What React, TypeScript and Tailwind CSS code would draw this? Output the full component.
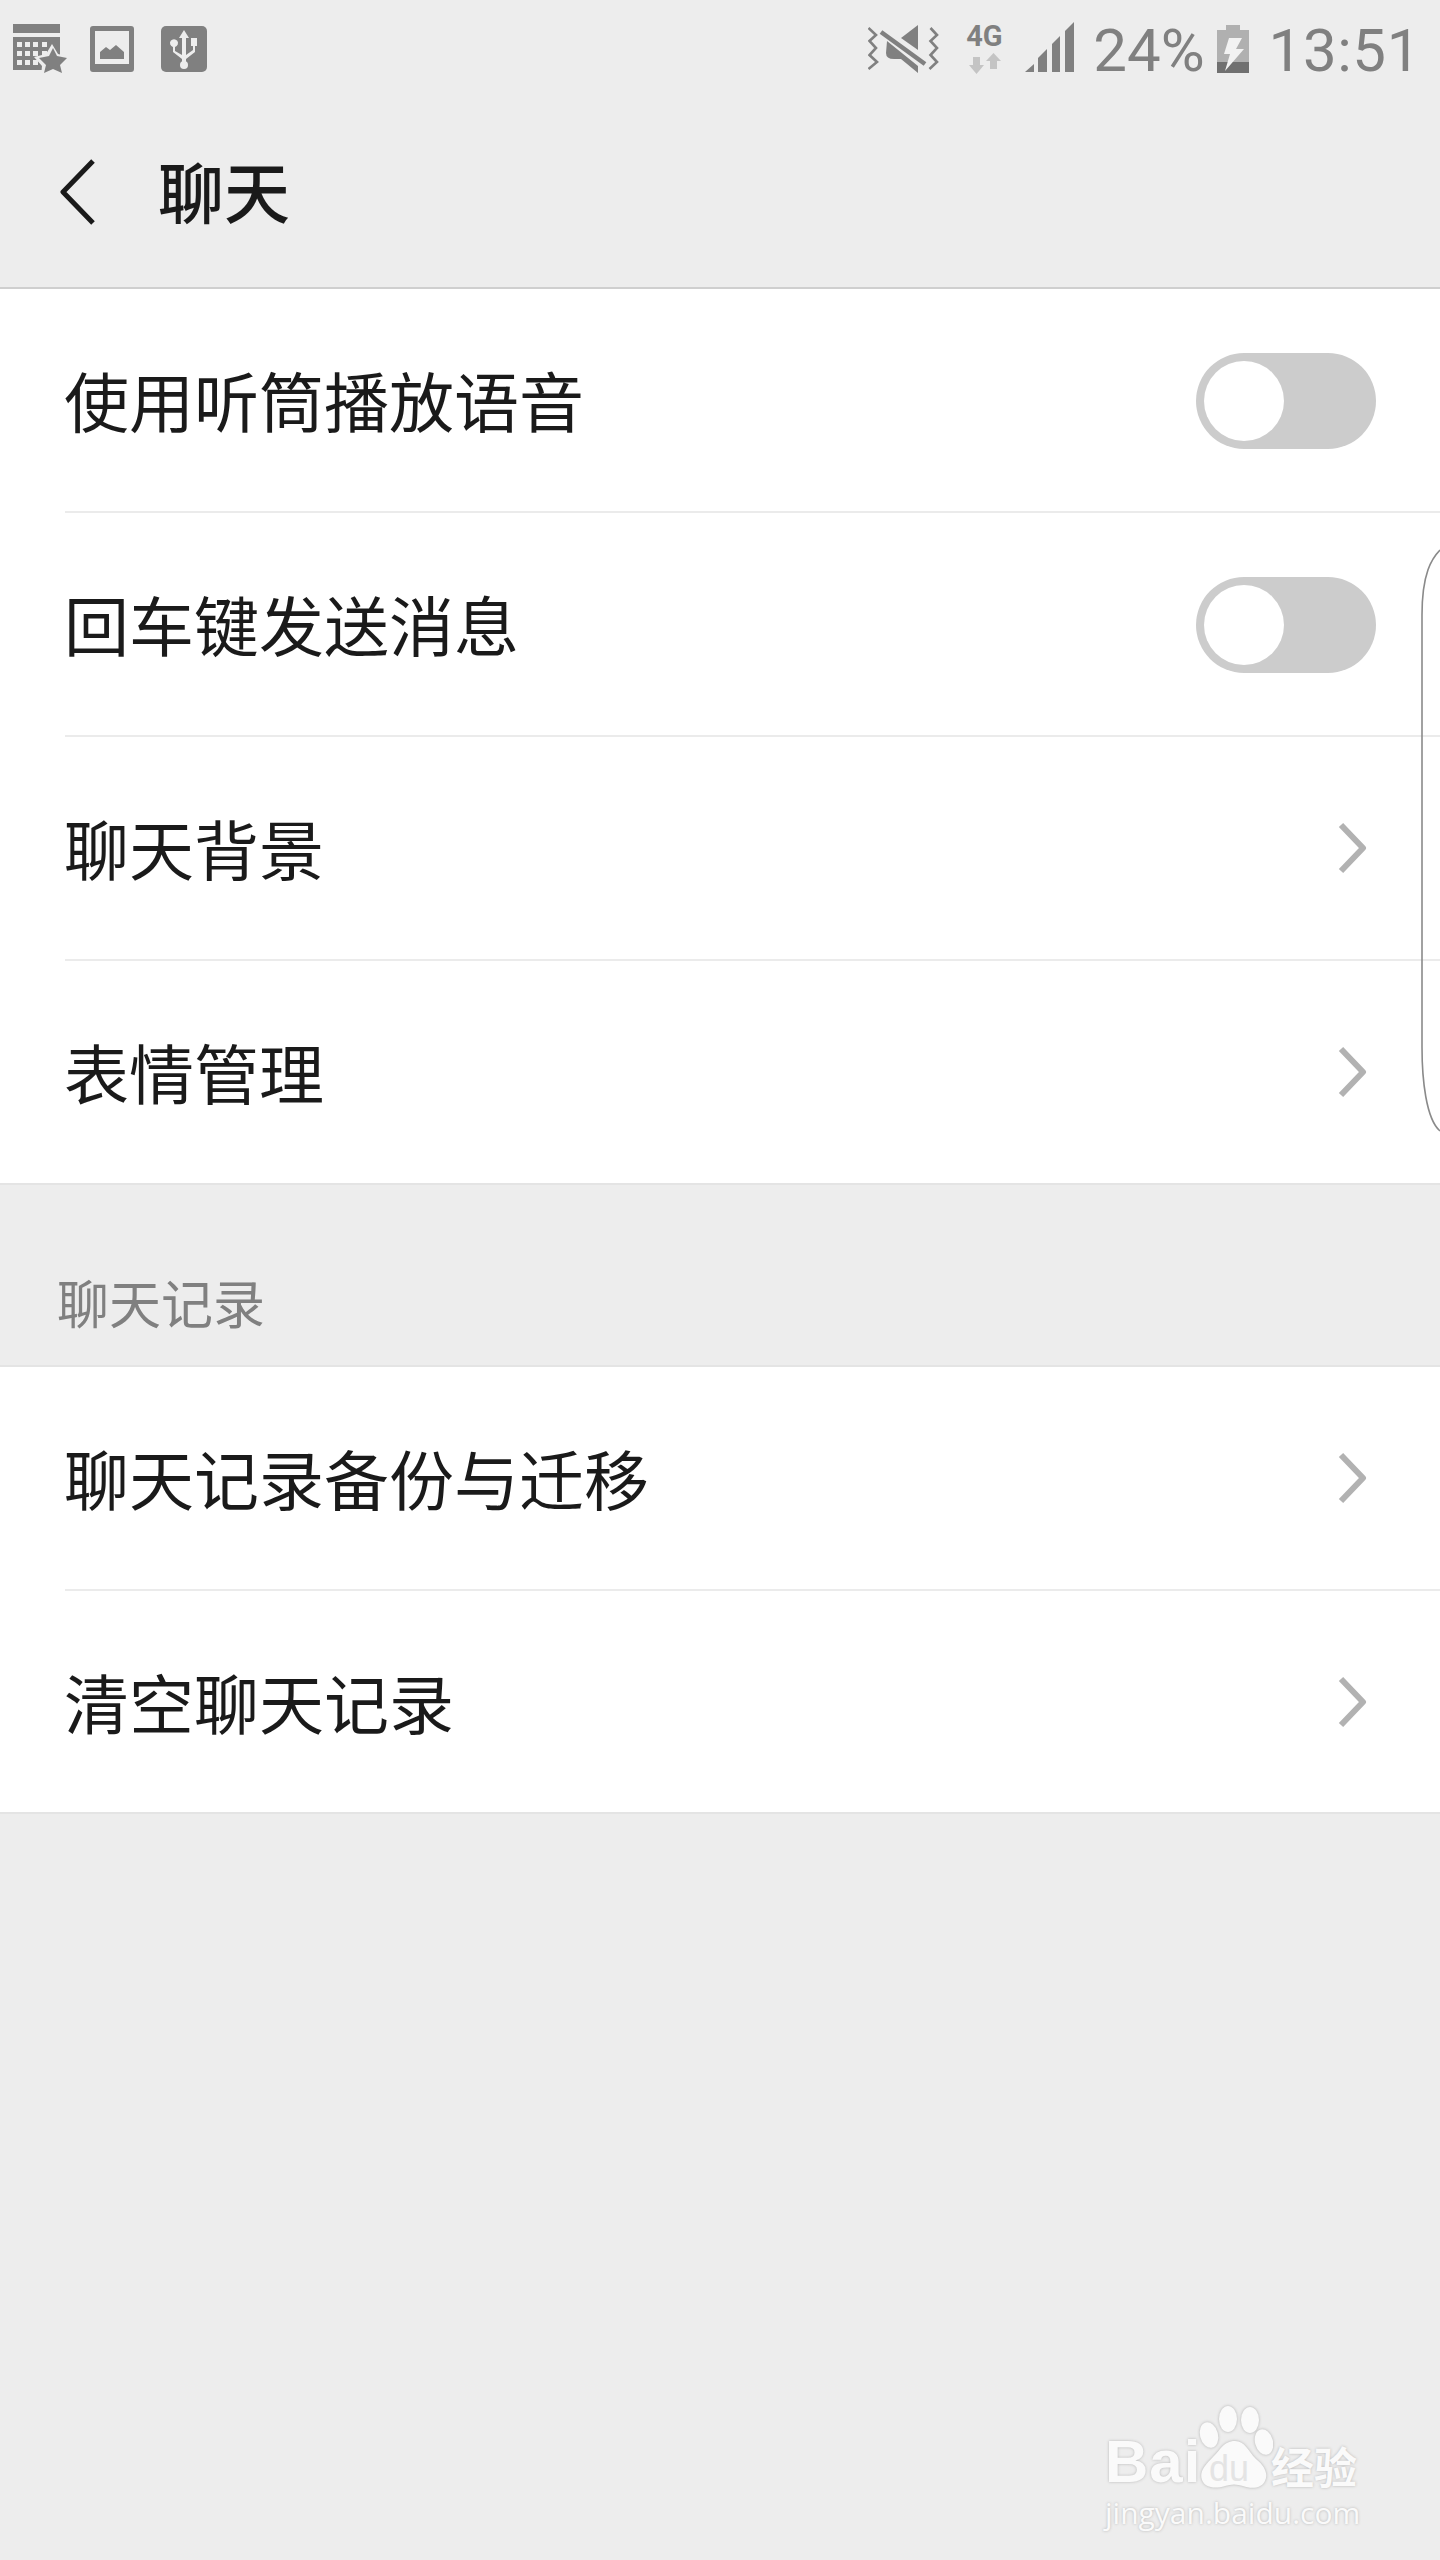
import React from "react";

const cjk = "font-['Noto_Sans_CJK_SC','Noto_Sans',sans-serif]";

function LeftIcons() {
  return (
    <svg width="220" height="96" viewBox="0 0 220 96" className="shrink-0">
      {/* calendar star */}
      <rect x="13" y="24" width="47" height="9" fill="#808080" />
      <rect x="13" y="37" width="47" height="33" fill="#808080" />
      {[17, 25, 33, 42].map((x) =>
        [42, 51, 60].map((y) => <rect key={x + "-" + y} x={x} y={y} width="5" height="5" fill="#ededed" />)
      )}
      <path d="M52 44 L58 54 L70 57 L62 66 L63 76 L52 71 L41 76 L42 66 L34 57 L46 54 Z" fill="#ededed" />
      <path d="M53 48 L57 56 L67 58 L60 65 L62 73 L53 69 L44 73 L46 65 L39 58 L49 56 Z" fill="#808080" />
      {/* picture */}
      <path fillRule="evenodd" d="M93 26 H131 Q134 26 134 29 V69 Q134 72 131 72 H93 Q90 72 90 69 V29 Q90 26 93 26 Z M95 31 V64 H129 V31 Z" fill="#808080" />
      <path d="M100 59 V52 L106 47 L110 50 L116 45 L124 52 V59 Z" fill="#808080" />
      {/* usb */}
      <rect x="161" y="26" width="46" height="46" rx="5" fill="#808080" />
      <path d="M184 30 L189 38 H186 V55 L193 50 V46 H191 V38 H197 V46 H195 V52 L186 59 V63 H182 V59 L173 52 V47 A4 4 0 1 1 175 47 V51 L182 55 V38 H179 Z" fill="#ededed" />
      <circle cx="184" cy="65" r="4" fill="#ededed" />
    </svg>
  );
}

function VibrateIcon() {
  return (
    <svg width="72" height="60" viewBox="0 0 72 60" className="shrink-0">
      <path d="M0.5 5 L8 12 L1.5 18 L8 25 L1.5 32 L9 39 L0.5 46" fill="none" stroke="#808080" strokeWidth="2.6" />
      <path d="M62.5 5 L69 12 L62.5 18 L69 25 L62.5 32 L69 39 L61.5 46" fill="none" stroke="#808080" strokeWidth="2.6" />
      <path d="M33 15 L50 2 V27 Z" fill="#808080" />
      <path d="M19 18 L50 43 V50 L33 36 H26 Q18 36 18 30 Z" fill="#808080" />
      <path d="M13 9 L57 41" stroke="#808080" strokeWidth="4.5" />
    </svg>
  );
}

function NetIcon() {
  return (
    <div className="relative w-[40px] h-[60px] shrink-0">
      <span className="absolute left-0 top-[1px] font-['Roboto',sans-serif] font-bold text-[29px] leading-[34px] text-[#808080]">4G</span>
      <svg width="40" height="24" viewBox="0 0 40 24" className="absolute left-0 top-[35px]">
        <path d="M7 4 H14 V12 H18 L10.5 21 L3 12 H7 Z" fill="#c4c4c4" />
        <path d="M24 16 V8 H20 L27.5 0 L35 8 H31 V16 Z" fill="#c4c4c4" />
      </svg>
    </div>
  );
}

function SignalIcon() {
  return (
    <svg width="50" height="50" viewBox="0 0 50 50" className="shrink-0 overflow-visible">
      <path d="M0 48 L9 40 V48 Z" fill="#808080" />
      <path d="M13 34 L22 25 V48 H13 Z" fill="#808080" />
      <path d="M27 20 L35 12 V48 H27 Z" fill="#808080" />
      <path d="M40 7 L49 -2 V48 H40 Z" fill="#808080" />
    </svg>
  );
}

function BatteryIcon() {
  return (
    <svg width="32" height="48" viewBox="0 0 32 48" className="shrink-0">
      <path d="M9 0 H23 V5 H32 V48 H0 V5 H9 Z" fill="#b0b0b0" />
      <rect x="0" y="37" width="32" height="11" fill="#707070" />
      <path d="M12 13 H25 L19 24 H27 L8 46 L13 29 H7 Z" fill="#f2f2f2" />
    </svg>
  );
}

function Toggle() {
  return (
    <div className="w-[180px] h-[96px] mt-[2px] rounded-full bg-[#cccccc] p-2 shrink-0">
      <div className="w-20 h-20 rounded-full bg-white" />
    </div>
  );
}

function Chevron() {
  return (
    <svg width="32" height="54" viewBox="0 0 32 54" className="shrink-0 mr-[6px] mt-[2px]">
      <path d="M3 3 L25 26 L3 49" fill="none" stroke="#b2b2b2" strokeWidth="6" strokeLinejoin="round" />
    </svg>
  );
}

function Row({ label, right, divider = true, heightClass = "h-[224px]" }: { label: string; right: React.ReactNode; divider?: boolean; heightClass?: string }) {
  return (
    <div className={"ml-[65px] pr-[64px] flex items-center justify-between " + heightClass + (divider ? " border-b-2 border-[#ebebeb]" : "")}>
      <span className={cjk + " -ml-[1px] mb-[1px] text-[65px] leading-none text-[#1a1a1a]"}>{label}</span>
      {right}
    </div>
  );
}

function Watermark() {
  const shadow = "[text-shadow:0_0_3px_#b5b5b5]";
  return (
    <div className="absolute left-[1098px] top-[2400px] w-[280px] h-[135px] text-[#fafafa] select-none">
      <svg width="80" height="90" viewBox="0 0 80 90" className="absolute left-[95px] top-[5px]" style={{ filter: "drop-shadow(0 0 1.5px #b0b0b0)" }}>
        <ellipse cx="16" cy="30" rx="9" ry="13" fill="#fafafa" transform="rotate(-15 16 30)" />
        <ellipse cx="35" cy="14" rx="9" ry="13" fill="#fafafa" />
        <ellipse cx="57" cy="15" rx="9" ry="13" fill="#fafafa" />
        <ellipse cx="71" cy="37" rx="9" ry="13" fill="#fafafa" transform="rotate(-15 71 37)" />
        <path d="M42 36 C52 36 55 46 63 54 C73 62 75 70 72 76 C68 84 58 84 50 81 C44 79 38 79 32 81 C22 84 12 83 9 75 C6 67 12 60 20 52 C27 46 30 36 42 36 Z" fill="#fafafa" />
      </svg>
      <span className={"absolute left-[7px] top-[27px] font-['Liberation_Sans',sans-serif] font-bold text-[60px] leading-[70px] tracking-[1px] " + shadow}>Bai</span>
      <span className="absolute left-[111px] top-[49px] font-['Liberation_Sans',sans-serif] text-[36px] leading-[40px] text-[#e4e4e4]">du</span>
      <span className={cjk + " absolute left-[173px] top-[35px] font-bold text-[43px] leading-[60px] " + shadow}>经验</span>
      <span className={"absolute left-[7px] top-[95px] font-['Open_Sans',sans-serif] text-[30px] leading-[36px] whitespace-nowrap " + shadow}>jingyan.baidu.com</span>
    </div>
  );
}

export default function App() {
  return (
    <div className="relative w-[1440px] h-[2560px] bg-[#ededed] overflow-hidden">
      <header className="h-[289px] border-b-2 border-[#cfcfcf] flex flex-col">
        <div className="h-[96px] flex items-center justify-between">
          <LeftIcons />
          <div className="flex items-center pr-[19px] font-['Roboto',sans-serif] text-[60px] leading-none text-[#808080]">
            <div className="mr-[26px] mt-[10px]"><VibrateIcon /></div>
            <div className="mr-[19px]"><NetIcon /></div>
            <div className="mr-[18px] mt-[2px]"><SignalIcon /></div>
            <span className="mr-[12px] mt-[6px]">24%</span>
            <div className="mr-[20px] mt-[2px]"><BatteryIcon /></div>
            <span className="mt-[6px] tracking-[0.6px]">13:51</span>
          </div>
        </div>
        <div className="flex items-center pl-[60px] h-[191px]">
          <svg width="36" height="68" viewBox="0 0 36 68" className="shrink-0">
            <path d="M33 3 L3 34 L33 65" fill="none" stroke="#1a1a1a" strokeWidth="5" strokeLinejoin="round" />
          </svg>
          <h1 className={cjk + " ml-[62px] mb-[5px] text-[66px] leading-none font-medium text-[#1a1a1a]"}>聊天</h1>
        </div>
      </header>

      <section className="bg-white border-b-2 border-[#e4e4e4]">
        <Row label="使用听筒播放语音" right={<Toggle />} />
        <Row label="回车键发送消息" right={<Toggle />} />
        <Row label="聊天背景" right={<Chevron />} />
        <Row label="表情管理" right={<Chevron />} divider={false} heightClass="h-[222px]" />
      </section>

      <div className="h-[180px] pl-[57px] pt-[91px]">
        <span className={cjk + " text-[52px] leading-none text-[#808080]"}>聊天记录</span>
      </div>

      <section className="bg-white border-t-2 border-b-2 border-[#e4e4e4]">
        <Row label="聊天记录备份与迁移" right={<Chevron />} heightClass="h-[224px]" />
        <Row label="清空聊天记录" right={<Chevron />} divider={false} heightClass="h-[221px]" />
      </section>

      <svg width="20" height="584" viewBox="0 0 20 584" className="absolute left-[1420px] top-[549px]">
        <path d="M20 1 C12 9 2 24 2 66 V498 C2 530 6 570 20 582" fill="none" stroke="#8a8a8a" strokeWidth="1.6" />
      </svg>

      <Watermark />
    </div>
  );
}
